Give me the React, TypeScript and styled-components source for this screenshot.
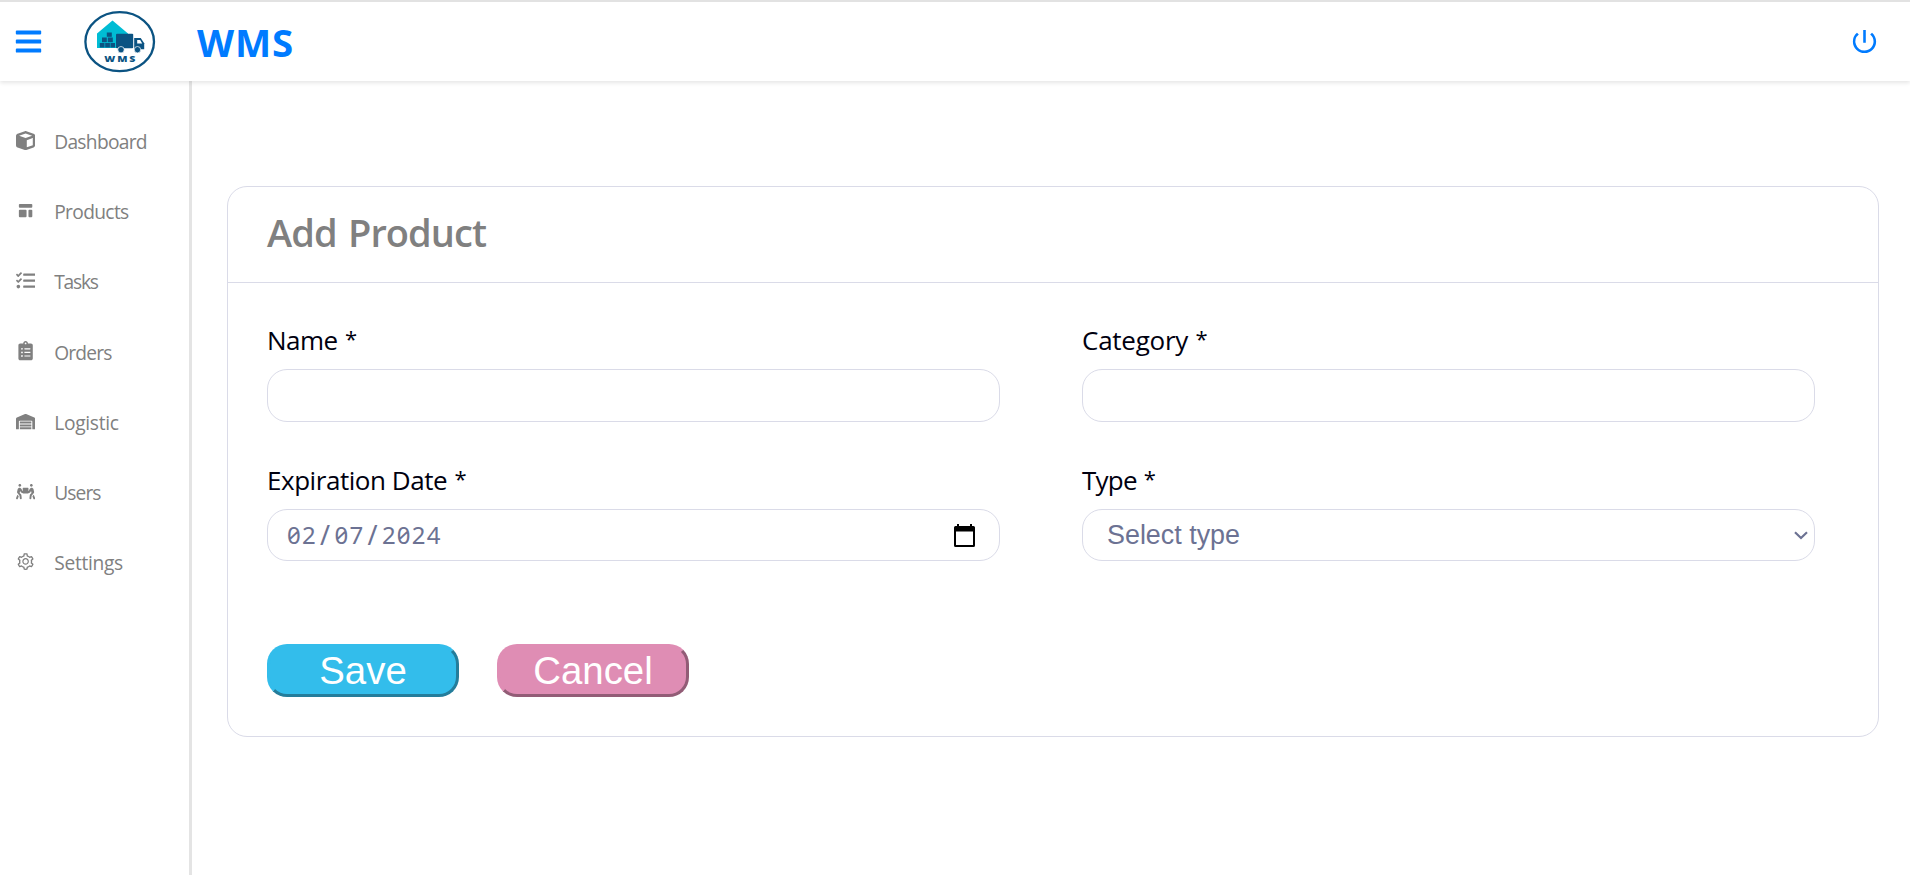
import React from 'react';
import styled, { createGlobalStyle } from 'styled-components';
import {
  FaBars,
  FaTasks,
  FaClipboardList,
  FaWarehouse,
  FaPeopleCarry,
} from 'react-icons/fa';
import { FaCube } from 'react-icons/fa6';
import { HiTemplate } from 'react-icons/hi';
import { AiOutlineSetting } from 'react-icons/ai';
import { MdPowerSettingsNew } from 'react-icons/md';

const GlobalStyle = createGlobalStyle`
  * { box-sizing: border-box; }
  body {
    margin: 0;
    background: #fff;
    font-family: "Open Sans", "Noto Sans", sans-serif;
    overflow: hidden;
  }
`;

const Page = styled.div`
  display: flex;
  flex-direction: column;
  height: 100vh;
`;

const Header = styled.header`
  display: flex;
  align-items: center;
  flex: none;
  height: 81px;
  padding: 0 30px 0 14px;
  border-top: 2px solid #e2e2e2;
  box-shadow: 0 2px 4px rgba(0, 0, 0, 0.1);
  background: #fff;
  color: #007bff;
  z-index: 1;
`;

const MenuButton = styled.button`
  display: flex;
  padding: 0;
  border: 0;
  background: none;
  color: inherit;
  font-size: 29px;
`;

const LogoBox = styled.div`
  display: flex;
  margin: 0 0 0 41px;
`;

const Brand = styled.h1`
  margin: 1px auto 0 41px;
  font-size: 38.4px;
  line-height: 52px;
  font-weight: 700;
  letter-spacing: 0.9px;
`;

const PowerButton = styled(MenuButton)`
  font-size: 31px;
`;

const Body = styled.div`
  display: flex;
  flex: 1;
  min-height: 0;
`;

const Sidebar = styled.nav`
  display: flex;
  flex-direction: column;
  flex: none;
  width: 192px;
  padding-top: 24px;
  border-right: 3px solid #e4e4e4;
`;

const NavItem = styled.a`
  display: flex;
  align-items: center;
  gap: 19px;
  height: 70.3px;
  padding-left: 16px;
  color: #808080;
  font-size: 19.2px;

  svg { flex: none; }
`;

const NavLabel = styled.span<{ $spacing: number }>`
  padding-top: 2px;
  letter-spacing: ${(p) => p.$spacing}px;
`;

const Main = styled.main`
  flex: 1;
  padding: 105px 31px 0 35px;
`;

const Card = styled.section`
  height: 551px;
  border: 1px solid #dadbe8;
  border-radius: 20px;
`;

const CardHeader = styled.div`
  height: 96px;
  padding: 19px 39px 0;
  border-bottom: 1px solid #dadbe8;
`;

const CardTitle = styled.h2`
  margin: 0;
  color: #808080;
  font-size: 38px;
  line-height: 52px;
  font-weight: 600;
  letter-spacing: -0.95px;
  word-spacing: 2.5px;
`;

const Form = styled.form`
  padding: 38px 63px 0 39px;
`;

const Fields = styled.div`
  display: grid;
  grid-template-columns: 733px 733px;
  column-gap: 82px;
  row-gap: 39px;
`;

const Field = styled.label`
  display: flex;
  flex-direction: column;
`;

const FieldLabel = styled.span<{ $spacing: number }>`
  height: 48px;
  line-height: 38px;
  color: #00000f;
  font-size: 26px;
  letter-spacing: ${(p) => p.$spacing}px;
`;

const Star = styled.span`
  margin-left: 1px;
  font-size: 22px;
  line-height: 1;
  vertical-align: 3px;
`;

const TextInput = styled.input`
  height: 53px;
  padding: 0 20px;
  border: 1px solid #dadbe8;
  border-radius: 20px;
  background: #fff;
  outline: none;
  font: 27px "Liberation Sans", Arial, sans-serif;
`;

const PickerBox = styled.div<{ $left: number; $right: number }>`
  display: flex;
  align-items: center;
  justify-content: space-between;
  height: 52px;
  padding: 0 ${(p) => p.$right}px 0 ${(p) => p.$left}px;
  border: 1px solid #dadbe8;
  border-radius: 20px;
  color: #6c7293;
  font-family: "Liberation Sans", Arial, sans-serif;
  font-size: 26.9px;
`;

const DateText = styled.div`
  display: flex;
  padding-bottom: 2px;
  font-family: "Noto Sans", sans-serif;
  font-size: 24px;
  font-feature-settings: "zero";
  letter-spacing: 1.2px;
`;

const Slash = styled.span`
  width: 17.6px;
  text-align: center;
  font-size: 27px;
  line-height: 33px;
`;

const Actions = styled.div`
  display: flex;
  gap: 38px;
  margin-top: 83px;
`;

const ActionButton = styled.button<{ $color: string; $shade: string }>`
  width: 192px;
  height: 53px;
  padding: 0;
  border: 3px solid ${(p) => p.$color};
  border-right-color: ${(p) => p.$shade};
  border-bottom-color: ${(p) => p.$shade};
  border-radius: 20px;
  background: ${(p) => p.$color};
  color: #fff;
  font: 38.4px/46px "Liberation Sans", Arial, sans-serif;
`;

const LogoLetters = styled.text`
  font: 800 9px "Open Sans", sans-serif;
  letter-spacing: 1.6px;
`;

const Logo = () => (
  <svg width="72" height="62" viewBox="0 0 72 62">
    <ellipse cx="35.7" cy="30.7" rx="34.3" ry="29.5" fill="#fff" stroke="#0b5382" strokeWidth="2.3" />
    <path d="M13 37V22.5L28.5 9.5L44 22.5V37Z" fill="#00bcd4" />
    <g fill="#0b5382">
      <rect x="22.8" y="21.5" width="5" height="4.3" />
      <rect x="18" y="26.5" width="4.8" height="4.7" />
      <rect x="23.8" y="26.5" width="5" height="4.7" />
      <rect x="15.8" y="32" width="4.7" height="4.5" />
      <rect x="21.2" y="32" width="4.7" height="4.5" />
      <rect x="26.5" y="32" width="4.5" height="4.5" />
      <rect x="32" y="22.8" width="17.2" height="14.5" rx="1" />
      <path d="M50.2 27h6.5l3.5 5.3v6h-10z" />
    </g>
    <path d="M53.2 29h3l2 3.6h-5z" fill="#fff" />
    <g fill="#0b5382" stroke="#fff" strokeWidth="0.7">
      <circle cx="37" cy="38.7" r="3.2" />
      <circle cx="53.5" cy="38.7" r="3.2" />
    </g>
    <LogoLetters x="20.3" y="51" fill="#0b5382" textLength="33" lengthAdjust="spacingAndGlyphs">WMS</LogoLetters>
  </svg>
);

const CalendarIcon = () => (
  <svg width="21" height="23" viewBox="0 0 21 23">
    <path
      fill="#000"
      fillRule="evenodd"
      d="M3 0h2v2h11V0h2v2h1.5A1.5 1.5 0 0 1 21 3.5v18a1.5 1.5 0 0 1-1.5 1.5h-18A1.5 1.5 0 0 1 0 21.5v-18A1.5 1.5 0 0 1 1.5 2H3zM2 7.5v13.5h17V7.5z"
    />
  </svg>
);

const ChevronIcon = () => (
  <svg width="14" height="9" viewBox="0 0 14 9">
    <path d="M1 1.3l6 5.7l6-5.7" fill="none" stroke="#6c7293" strokeWidth="2.2" />
  </svg>
);

const navItems = [
  { label: 'Dashboard', Icon: FaCube, spacing: -0.7 },
  { label: 'Products', Icon: HiTemplate, spacing: -0.65 },
  { label: 'Tasks', Icon: FaTasks, spacing: -1.2 },
  { label: 'Orders', Icon: FaClipboardList, spacing: -0.8 },
  { label: 'Logistic', Icon: FaWarehouse, spacing: -0.3 },
  { label: 'Users', Icon: FaPeopleCarry, spacing: -0.9 },
  { label: 'Settings', Icon: AiOutlineSetting, spacing: -0.3 },
];

export default function App() {
  return (
    <Page>
      <GlobalStyle />
      <Header>
        <MenuButton type="button" aria-label="Menu"><FaBars /></MenuButton>
        <LogoBox><Logo /></LogoBox>
        <Brand>WMS</Brand>
        <PowerButton type="button" aria-label="Log out"><MdPowerSettingsNew /></PowerButton>
      </Header>
      <Body>
        <Sidebar>
          {navItems.map(({ label, Icon, spacing }) => (
            <NavItem key={label}>
              <Icon />
              <NavLabel $spacing={spacing}>{label}</NavLabel>
            </NavItem>
          ))}
        </Sidebar>
        <Main>
          <Card>
            <CardHeader><CardTitle>Add Product</CardTitle></CardHeader>
            <Form>
              <Fields>
                <Field>
                  <FieldLabel $spacing={-0.5}>Name <Star>*</Star></FieldLabel>
                  <TextInput />
                </Field>
                <Field>
                  <FieldLabel $spacing={-0.25}>Category <Star>*</Star></FieldLabel>
                  <TextInput />
                </Field>
                <Field>
                  <FieldLabel $spacing={-0.45}>Expiration Date <Star>*</Star></FieldLabel>
                  <PickerBox $left={19} $right={24}>
                    <DateText>
                      <span>02</span><Slash>/</Slash><span>07</span><Slash>/</Slash><span>2024</span>
                    </DateText>
                    <CalendarIcon />
                  </PickerBox>
                </Field>
                <Field>
                  <FieldLabel $spacing={-0.75}>Type <Star>*</Star></FieldLabel>
                  <PickerBox $left={24} $right={6}>
                    <span>Select type</span>
                    <ChevronIcon />
                  </PickerBox>
                </Field>
              </Fields>
              <Actions>
                <ActionButton type="button" $color="#33bdeb" $shade="#247d9b">Save</ActionButton>
                <ActionButton type="button" $color="#df8db4" $shade="#925c76">Cancel</ActionButton>
              </Actions>
            </Form>
          </Card>
        </Main>
      </Body>
    </Page>
  );
}
